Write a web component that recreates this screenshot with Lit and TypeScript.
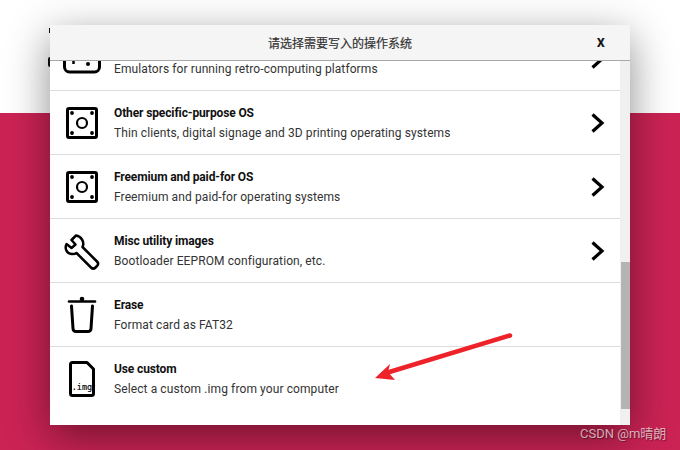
import { LitElement, html, css, svg } from "lit";
import { customElement } from "lit/decorators.js";

const board = svg`<svg class="icon" width="40" height="40" viewBox="0 0 40 40">
  <rect x="5.500" y="5.500" width="29" height="29" rx="1.500" fill="none" stroke="#000" stroke-width="3"/>
  <circle cx="20" cy="20" r="5" fill="none" stroke="#000" stroke-width="2.200"/>
  <circle cx="10" cy="10" r="1.900"/><circle cx="30" cy="10" r="1.900"/>
  <circle cx="10" cy="30" r="1.900"/><circle cx="30" cy="30" r="1.900"/></svg>`;

const pad = svg`<svg class="icon" width="40" height="40" viewBox="0 0 40 40">
  <rect x="2.500" y="7" width="35" height="26" rx="5" fill="none" stroke="#000" stroke-width="3"/>
  <path d="M7 20h9M11.500 15.500v9.500" stroke="#000" stroke-width="2.500"/>
  <circle cx="26" cy="25" r="2"/><circle cx="31" cy="18" r="2"/></svg>`;

const wrench = svg`<svg class="icon" width="40" height="40" viewBox="0 0 40 40">
  <path d="M14 4.500 L9.500 9 L13.500 13.500 L9.500 17 L4.500 13 C2.500 17.500 4.500 22.500 9.500 23 C11.500 23.300 13 23 14.500 22 L29 36.500 C30.500 38 32 38 33.500 36.500 L35 35 C36.500 33.500 36.500 32 35 30.500 L20.500 16 C21.500 14 21.500 11 20 8.500 C18.500 6 16.500 4.800 14 4.500 Z" fill="none" stroke="#000" stroke-width="2.500" stroke-linejoin="round"/></svg>`;

const trash = svg`<svg class="icon" width="40" height="40" viewBox="0 0 40 40">
  <path d="M7 6.500H33" stroke="#000" stroke-width="2.600" stroke-linecap="round"/>
  <circle cx="20" cy="4" r="2.300"/>
  <path d="M9.500 11 L11 33.500 C11.100 35.500 12 36.500 14 36.500 H26 C28 36.500 28.900 35.500 29 33.500 L30.500 11" fill="none" stroke="#000" stroke-width="3" stroke-linecap="round"/></svg>`;

const file = svg`<svg class="icon" width="40" height="40" viewBox="0 0 40 40">
  <path d="M10.500 3.500 H25 L31.500 10 V34.500 C31.500 35.800 30.700 36.500 29.500 36.500 H10.500 C9.300 36.500 8.500 35.800 8.500 34.500 V5.500 C8.500 4.200 9.300 3.500 10.500 3.500 Z" fill="none" stroke="#000" stroke-width="3" stroke-linejoin="round"/>
  <text x="20" y="31" text-anchor="middle" class="img">.img</text></svg>`;

const chevron = svg`<svg width="16" height="20" viewBox="0 0 16 20"><path d="M2.500 1.500 L12 10 L2.500 18.500" fill="none" stroke="#000" stroke-width="3.200"/></svg>`;

const rows = [
  { icon: pad, title: "", desc: "Emulators for running retro-computing platforms", more: true },
  { icon: board, title: "Other specific-purpose OS", desc: "Thin clients, digital signage and 3D printing operating systems", more: true },
  { icon: board, title: "Freemium and paid-for OS", desc: "Freemium and paid-for operating systems", more: true },
  { icon: wrench, title: "Misc utility images", desc: "Bootloader EEPROM configuration, etc.", more: true },
  { icon: trash, title: "Erase", desc: "Format card as FAT32", more: false },
  { icon: file, title: "Use custom", desc: "Select a custom .img from your computer", more: false },
];

@customElement("app-root")
export class AppRoot extends LitElement {
  static styles = css`
    :host { display: block; position: relative; width: 680px; height: 450px; overflow: hidden;
      font-family: Roboto, "Noto Sans CJK SC", sans-serif; }
    .page { display: flex; flex-direction: column; height: 450px; }
    .top { height: 113px; background: #fff; }
    .bottom { flex: 1; background: #cb2354; }
    .peek { position: absolute; background: #111; }
    .p1 { left: 49px; width: 1px; top: 28px; height: 5px; }
    .p2 { left: 48px; width: 2px; top: 57px; height: 10px; border-radius: 2px 0 0 2px; }
    .dialog { position: absolute; left: 50px; top: 25px; width: 580px; height: 400px; background: #fff;
      box-shadow: 0 12px 40px rgba(0,0,0,.45); display: flex; flex-direction: column; }
    .head { height: 35px; flex: none; background: #f5f5f5; border-bottom: 1px solid #a8a8a8;
      display: flex; align-items: center; justify-content: center; position: relative;
      font-size: 12px; color: #333; -webkit-text-stroke: .2px #333; }
    .x { position: absolute; left: 547px; top: 10px; font-size: 12px; font-weight: 700; color: #111;
      -webkit-text-stroke: .2px #111; line-height: 16px; }
    .body { flex: 1; display: flex; min-height: 0; }
    .list { flex: 1; overflow: hidden; }
    .inner { margin-top: -34px; }
    .row { height: 63px; border-bottom: 1px solid #dcdcdc; display: flex; align-items: center; }
    .row:last-child { border-bottom: 0; }
    .icon { flex: none; margin-left: 12px; fill: #000; }
    .text { flex: 1; margin-left: 12px; padding-top: 2px; display: flex; flex-direction: column; gap: 5px; }
    .title { font-size: 12px; font-weight: 700; letter-spacing: -.12px; color: #111; line-height: 15px; min-height: 15px; }
    .desc { font-size: 12px; letter-spacing: .1px; color: #333; line-height: 15px; }
    .more { flex: none; margin-right: 14px; display: flex; }
    .img { font-family: "DejaVu Sans Mono", monospace; font-size: 8.500px; fill: #000; stroke: #000; stroke-width: .15px; }
    .track { width: 10px; flex: none; background: #f0f0f0; padding: 201px 0 16px 1px; box-sizing: border-box; }
    .thumb { height: 100%; background: #b4b4b4; }
    .arrow { position: absolute; left: 370px; top: 328px; }
    .mark { position: absolute; left: 580px; top: 426px; font-size: 13px; line-height: 16px; color: rgba(255,255,255,.65);
      text-shadow: 1px 1px 1px rgba(0,0,0,.4); }
  `;

  render() {
    return html`
      <div class="page"><div class="top"></div><div class="bottom"></div></div>
      <div class="peek p1"></div><div class="peek p2"></div>
      <div class="dialog">
        <div class="head">请选择需要写入的操作系统<span class="x">X</span></div>
        <div class="body">
          <div class="list"><div class="inner">
            ${rows.map((r) => html`
              <div class="row">
                ${r.icon}
                <div class="text"><div class="title">${r.title}</div><div class="desc">${r.desc}</div></div>
                ${r.more ? html`<div class="more">${chevron}</div>` : ""}
              </div>`)}
          </div></div>
          <div class="track"><div class="thumb"></div></div>
        </div>
      </div>
      <svg class="arrow" width="146" height="56" viewBox="370 328 146 56">
        <path d="M510 335.500 L386 373" stroke="#ee2229" stroke-width="4.500" stroke-linecap="round" fill="none"/>
        <path d="M375 378 L390 364 L388 372 L395 380 Z" fill="#ee2229"/>
      </svg>
      <div class="mark">CSDN @m晴朗</div>
    `;
  }
}
